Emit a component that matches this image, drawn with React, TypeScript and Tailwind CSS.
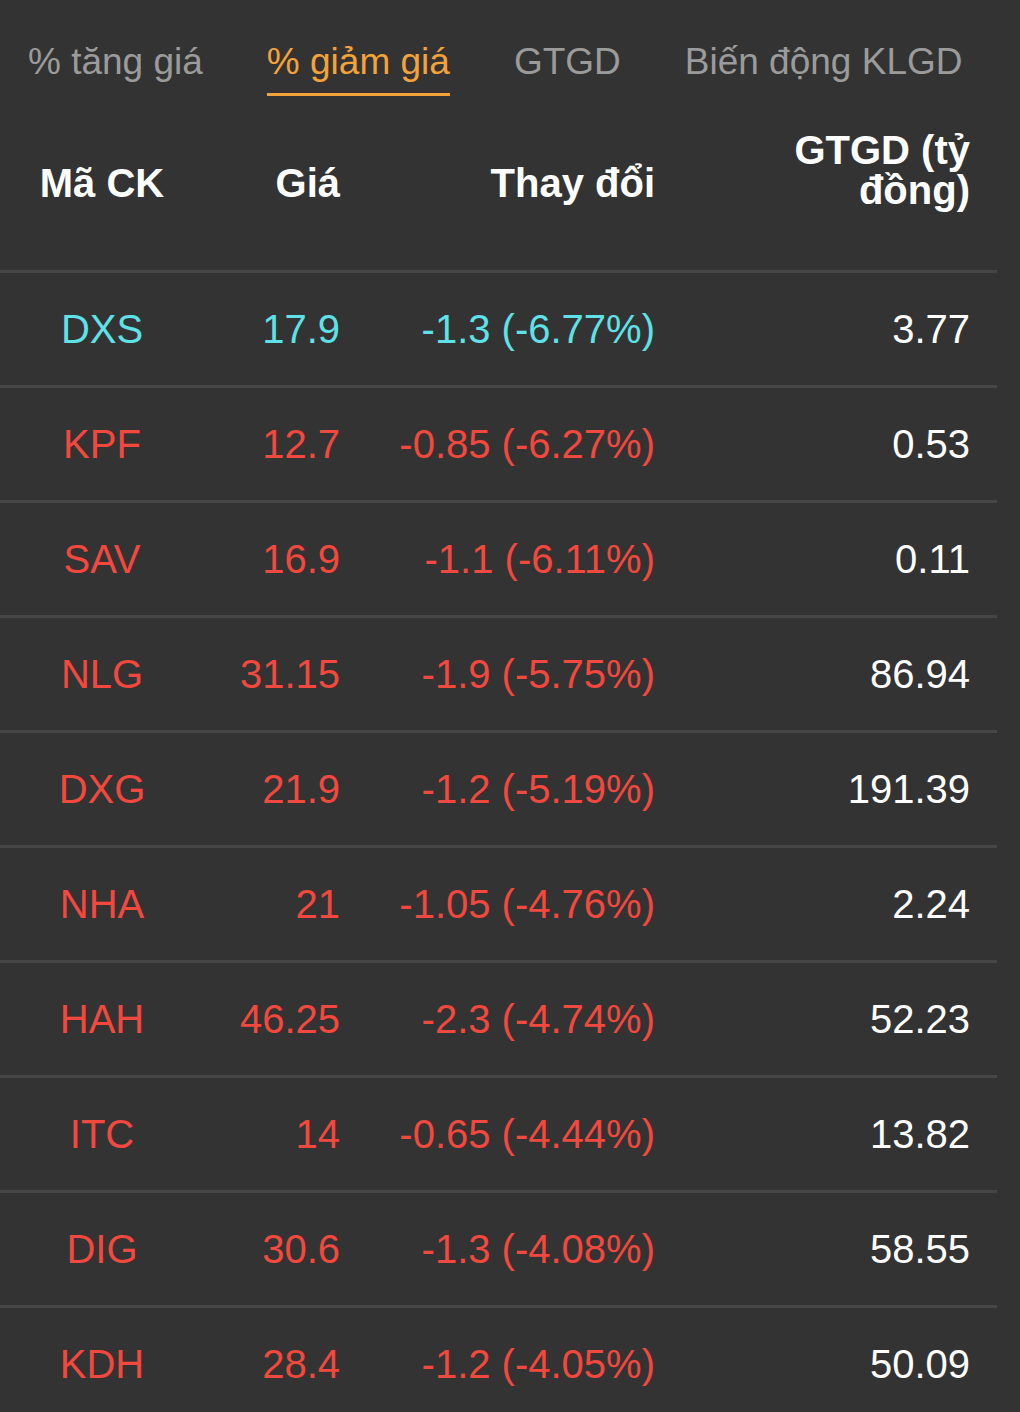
import React from "react";

type Row = { code: string; price: string; change: string; value: string; up?: boolean };

const rows: Row[] = [
  { code: "DXS", price: "17.9", change: "-1.3 (-6.77%)", value: "3.77", up: true },
  { code: "KPF", price: "12.7", change: "-0.85 (-6.27%)", value: "0.53" },
  { code: "SAV", price: "16.9", change: "-1.1 (-6.11%)", value: "0.11" },
  { code: "NLG", price: "31.15", change: "-1.9 (-5.75%)", value: "86.94" },
  { code: "DXG", price: "21.9", change: "-1.2 (-5.19%)", value: "191.39" },
  { code: "NHA", price: "21", change: "-1.05 (-4.76%)", value: "2.24" },
  { code: "HAH", price: "46.25", change: "-2.3 (-4.74%)", value: "52.23" },
  { code: "ITC", price: "14", change: "-0.65 (-4.44%)", value: "13.82" },
  { code: "DIG", price: "30.6", change: "-1.3 (-4.08%)", value: "58.55" },
  { code: "KDH", price: "28.4", change: "-1.2 (-4.05%)", value: "50.09" },
];

const tabs = ["% tăng giá", "% giảm giá", "GTGD", "Biến động KLGD"];

export default function App() {
  return (
    <div className="w-[1020px] h-[1412px] overflow-hidden bg-[#333333] font-['Liberation_Sans',Arial,sans-serif]">
      {/* Tabs */}
      <div className="flex gap-[64px] pl-[28px] pt-[40px]">
        {tabs.map((t, i) => (
          <div
            key={t}
            className={`text-[37px] leading-[44px] pb-[9px] border-b-[3px] ${
              i === 1 ? "text-[#f4a23a] border-[#f4a23a]" : "text-[#9b9b9b] border-transparent"
            }`}
          >
            {t}
          </div>
        ))}
      </div>

      <div className="w-[997px]">
        {/* Header */}
        <div className="grid grid-cols-[204px_136px_315px_315px] items-center h-[174px] text-white font-bold text-[40px]">
          <div className="text-center">Mã CK</div>
          <div className="text-right">Giá</div>
          <div className="text-right">Thay đổi</div>
          <div className="text-right leading-[40px] pb-[26px]">
            GTGD (tỷ
            <br />
            đồng)
          </div>
        </div>

        {/* Rows */}
        {rows.map((r) => {
          const color = r.up ? "text-[#5fe1e8]" : "text-[#f2483d]";
          return (
            <div
              key={r.code}
              className="grid grid-cols-[204px_136px_315px_315px] items-center h-[115px] border-t-[3px] border-[#464646] text-[40px]"
            >
              <div className={`text-center ${color}`}>{r.code}</div>
              <div className={`text-right ${color}`}>{r.price}</div>
              <div className={`text-right ${color}`}>{r.change}</div>
              <div className="text-right text-white">{r.value}</div>
            </div>
          );
        })}
      </div>
    </div>
  );
}
